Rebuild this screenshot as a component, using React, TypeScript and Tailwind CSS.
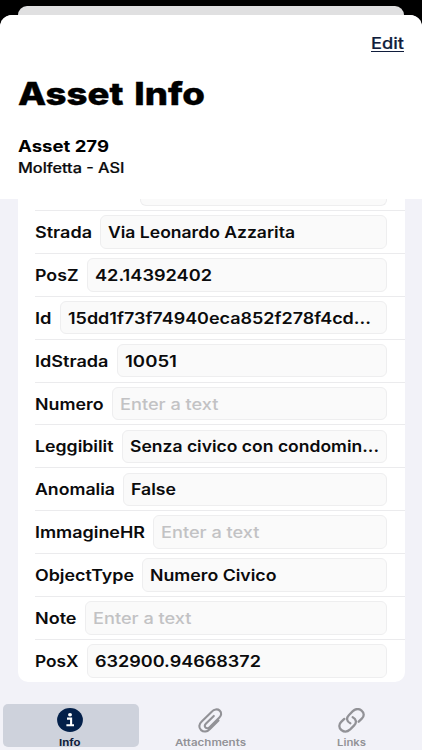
import { useLayoutEffect, useRef, useState } from 'react';

type FitProps = { text: string; width: number; className?: string };

// Single line of text stretched horizontally to a given advance width.
function Fit({ text, width, className = '' }: FitProps) {
  const ref = useRef<HTMLSpanElement>(null);
  const [scale, setScale] = useState(1.1);
  useLayoutEffect(() => {
    if (ref.current) setScale(width / parseFloat(getComputedStyle(ref.current).width));
  }, [text, width]);
  return (
    <span className="block shrink-0" style={{ width }}>
      <span
        ref={ref}
        className={`inline-block origin-left whitespace-nowrap align-top ${className}`}
        style={{ transform: `scaleX(${scale})` }}
      >
        {text}
      </span>
    </span>
  );
}

type Field = { label: string; labelWidth: number; value?: string; valueWidth?: number };

const fields: Field[] = [
  { label: 'Strada', labelWidth: 57, value: 'Via Leonardo Azzarita', valueWidth: 187 },
  { label: 'PosZ', labelWidth: 43.5, value: '42.14392402', valueWidth: 117 },
  { label: 'Id', labelWidth: 16.5, value: '15dd1f73f74940eca852f278f4cd...', valueWidth: 303 },
  { label: 'IdStrada', labelWidth: 73.5, value: '10051', valueWidth: 52 },
  { label: 'Numero', labelWidth: 68.5 },
  { label: 'Leggibilit', labelWidth: 78.5, value: 'Senza civico con condomin...', valueWidth: 249 },
  { label: 'Anomalia', labelWidth: 80, value: 'False', valueWidth: 45 },
  { label: 'ImmagineHR', labelWidth: 110 },
  { label: 'ObjectType', labelWidth: 99, value: 'Numero Civico', valueWidth: 126.5 },
  { label: 'Note', labelWidth: 41.5 },
  { label: 'PosX', labelWidth: 43.5, value: '632900.94668372', valueWidth: 166 },
];

function Row({ label, labelWidth, value, valueWidth = 98.5 }: Field) {
  return (
    <div className="ml-[17px] flex h-[42.9px] items-center border-t border-[#ebebed] pr-[17.5px] text-[15.7px] font-semibold leading-[20px] text-[#0b0b0c]">
      <div className="pt-[2px]">
        <Fit text={label} width={labelWidth} />
      </div>
      <div className="ml-[8.5px] flex h-[33.5px] flex-1 items-center rounded-[6px] border border-[#eeeeef] bg-[#fafafa] pl-[7px] pt-[2px]">
        <Fit text={value ?? 'Enter a text'} width={valueWidth} className={value ? '' : 'font-medium text-[#c2c2c4]'} />
      </div>
    </div>
  );
}

function InfoIcon() {
  return (
    <svg className="h-[24px] w-[26px] shrink-0" viewBox="0 0 26 24" preserveAspectRatio="none">
      <ellipse cx="13" cy="12" rx="12.9" ry="11.9" fill="#03204a" />
      <ellipse cx="13" cy="6.8" rx="2" ry="1.8" fill="#fff" />
      <path d="M10 10.6h4.1v6.3M9.4 17.3h7.6" fill="none" stroke="#fff" strokeWidth="2.1" />
    </svg>
  );
}

function ClipIcon() {
  return (
    <svg className="h-[25px] w-[26px] shrink-0" viewBox="0 0 26 25" fill="none" stroke="#929297" strokeWidth="2.1" strokeLinecap="round">
      <path d="M20.5 12.5 12.2 20.7C9.5 23.7 5.8 24.4 3.1 22.1.4 19.7.9 16.3 3.7 13.6L14 3.4C16 1.3 19.5.6 21.7 2.6c2.2 2 1.7 4.9-.3 6.9L11.6 19.2c-1.2 1.2-3 1.5-4.1.4s-.9-2.7.3-3.9l8-7.8" />
    </svg>
  );
}

function LinkIcon() {
  return (
    <svg className="h-[25px] w-[27px] shrink-0" viewBox="0 0 27 25" fill="none" stroke="#929297" strokeWidth="2.3" strokeLinecap="round">
      <path d="M12.3 15.3C8.5 13.6 8.2 9.8 10.8 7.2l4-4c2.6-2.4 6.1-2.7 8.8-.6 2.8 2.3 2.7 5.7.2 8.1l-3.1 3" />
      <path d="M14.7 9.2c3.8 1.7 4.1 5.6 1.5 8.2l-4 4c-2.6 2.4-6.1 2.7-8.8.6-2.8-2.3-2.7-5.7-.2-8.1l3.1-3" />
    </svg>
  );
}

export default function App() {
  return (
    <div className="flex h-[750px] w-[422px] flex-col overflow-hidden bg-black font-['Inter','Liberation_Sans',sans-serif]">
      <div className="mx-[18px] mt-[6px] h-[9px] shrink-0 rounded-t-[10px] bg-[#e0e0e1]" />
      <div className="flex min-h-0 flex-1 flex-col overflow-hidden rounded-t-[12px] bg-[#f2f2f8]">
        <header className="flex h-[184px] shrink-0 flex-col bg-white pl-[18px] pr-[18px]">
          <div className="mt-[18px] flex h-[20px] justify-end text-[16.5px] font-medium leading-[20px] text-[#101d3c] [-webkit-text-stroke:0.2px_#101d3c]">
            <div className="h-[19px] border-b-[1.5px] border-[#101d3c]">
              <Fit text="Edit" width={33} />
            </div>
          </div>
          <h1 className="mt-[21px] text-[31.4px] font-extrabold leading-[40px] text-black [-webkit-text-stroke:0.4px_black]">
            <Fit text="Asset Info" width={187} className="[word-spacing:2.5px]" />
          </h1>
          <div className="mt-[23px] text-[15.7px] font-bold leading-[20px] text-black">
            <Fit text="Asset 279" width={91} />
          </div>
          <div className="mt-[1px] text-[13.8px] font-medium leading-[20px] text-[#0b0b0c] [-webkit-text-stroke:0.2px_#0b0b0c]">
            <Fit text="Molfetta - ASI" width={106.5} />
          </div>
        </header>
        <main className="mx-[17.5px] shrink-0 overflow-hidden rounded-b-[10px] bg-white">
          <div className="flex h-[11px] pl-[122px] pr-[17.5px]">
            <div className="h-[6.5px] flex-1 rounded-b-[6px] border border-t-0 border-[#eeeeef] bg-[#fafafa]" />
          </div>
          {fields.map((f) => (
            <Row key={f.label} {...f} />
          ))}
        </main>
        <nav className="mt-auto flex h-[46.5px] shrink-0 pl-[2.5px] text-[9.3px] font-semibold leading-[12px] text-[#929297]">
          <div className="flex h-[43.5px] w-[136px] flex-col items-center rounded-[5px] bg-[#ced2dc] pr-[1px] pt-[4.5px] font-bold text-[#101d3c]">
            <InfoIcon />
            <div className="mt-[4.5px]"><Fit text="Info" width={21.5} /></div>
          </div>
          <div className="flex w-[144px] flex-col items-center pt-[4.5px]">
            <ClipIcon />
            <div className="mt-[3.5px]"><Fit text="Attachments" width={71} /></div>
          </div>
          <div className="flex w-[137px] flex-col items-center pt-[4.5px]">
            <LinkIcon />
            <div className="mt-[3.5px]"><Fit text="Links" width={29} /></div>
          </div>
        </nav>
      </div>
    </div>
  );
}
